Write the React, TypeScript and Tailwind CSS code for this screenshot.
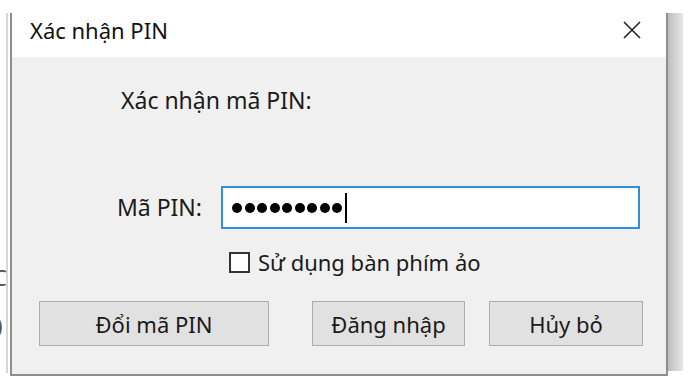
import React from 'react';

const font = { fontFamily: '"Noto Sans", "Open Sans", sans-serif' };

function CloseIcon() {
  return (
    <svg width="20" height="20" viewBox="0 0 20 20" className="text-[#222]">
      <path d="M2 2 L18 18 M18 2 L2 18" stroke="currentColor" strokeWidth="1.6" fill="none" />
    </svg>
  );
}

function Button({ label, width }: { label: string; width: string }) {
  return (
    <button
      className={`${width} h-[45px] bg-[#e1e1e1] border border-[#adadad] text-[22px] text-[#1a1a1a] leading-none`}
    >
      {label}
    </button>
  );
}

export default function App() {
  return (
    <div className="w-[689px] h-[384px] bg-white relative overflow-hidden" style={font}>
      {/* window behind, left edge */}
      <div className="absolute left-[6px] top-[13px] w-[2px] h-[360px] bg-[#d6d6d6]"></div>
      <div className="absolute left-[-7px] top-[266px] text-[22px] text-[#555] leading-none">C</div>
      <div className="absolute left-[-4px] top-[314px] text-[22px] text-[#555] leading-none">)</div>
      {/* window behind, right edge */}
      <div className="absolute left-[668px] top-[13px] w-[15px] h-[358px] bg-gradient-to-r from-[#bdbdbd] via-[#d4d4d4] to-[#e6e6e6]"></div>

      <div className="ml-[10px] mt-[13px] w-[658px] h-[363px] flex flex-col border-x-2 border-b-2 border-[#8e8e8e] relative z-10">
        {/* title bar */}
        <div className="h-[44px] bg-white flex items-start justify-between">
          <span className="pl-[18px] pt-[1px] text-[22px] text-[#111]">Xác nhận PIN</span>
          <span className="pr-[24px] pt-[7px]">
            <CloseIcon />
          </span>
        </div>

        {/* body */}
        <div className="flex-1 bg-[#f0f0f0] flex flex-col">
          <div className="pl-[109px] pt-[29px] h-[55px] text-[23px] leading-[28px] text-[#1a1a1a]">
            Xác nhận mã PIN:
          </div>

          <div className="mt-[74px] flex items-center">
            <div className="w-[190px] text-right text-[23px] text-[#1a1a1a]">Mã PIN:</div>
            <div className="ml-[19px] w-[419px] h-[43px] bg-white border-2 border-[#2c8fe0] flex items-center pl-[9px]">
              <div className="flex gap-[2.5px]">
                {[...Array(9)].map((_, i) => (
                  <span key={i} className="w-[10px] h-[10px] rounded-full bg-black"></span>
                ))}
              </div>
              <span className="ml-[3px] w-[2px] h-[30px] bg-black"></span>
            </div>
          </div>

          <div className="mt-[22px] ml-[217px] flex items-center">
            <span className="w-[21px] h-[21px] bg-white border-2 border-[#333]"></span>
            <span className="ml-[8px] text-[22px] text-[#1a1a1a] leading-[22px]">Sử dụng bàn phím ảo</span>
          </div>

          <div className="mt-[28px] ml-[27px] flex">
            <Button label="Đổi mã PIN" width="w-[230px]" />
            <div className="ml-[43px]">
              <Button label="Đăng nhập" width="w-[153px]" />
            </div>
            <div className="ml-[24px]">
              <Button label="Hủy bỏ" width="w-[154px]" />
            </div>
          </div>
        </div>
      </div>
    </div>
  );
}
